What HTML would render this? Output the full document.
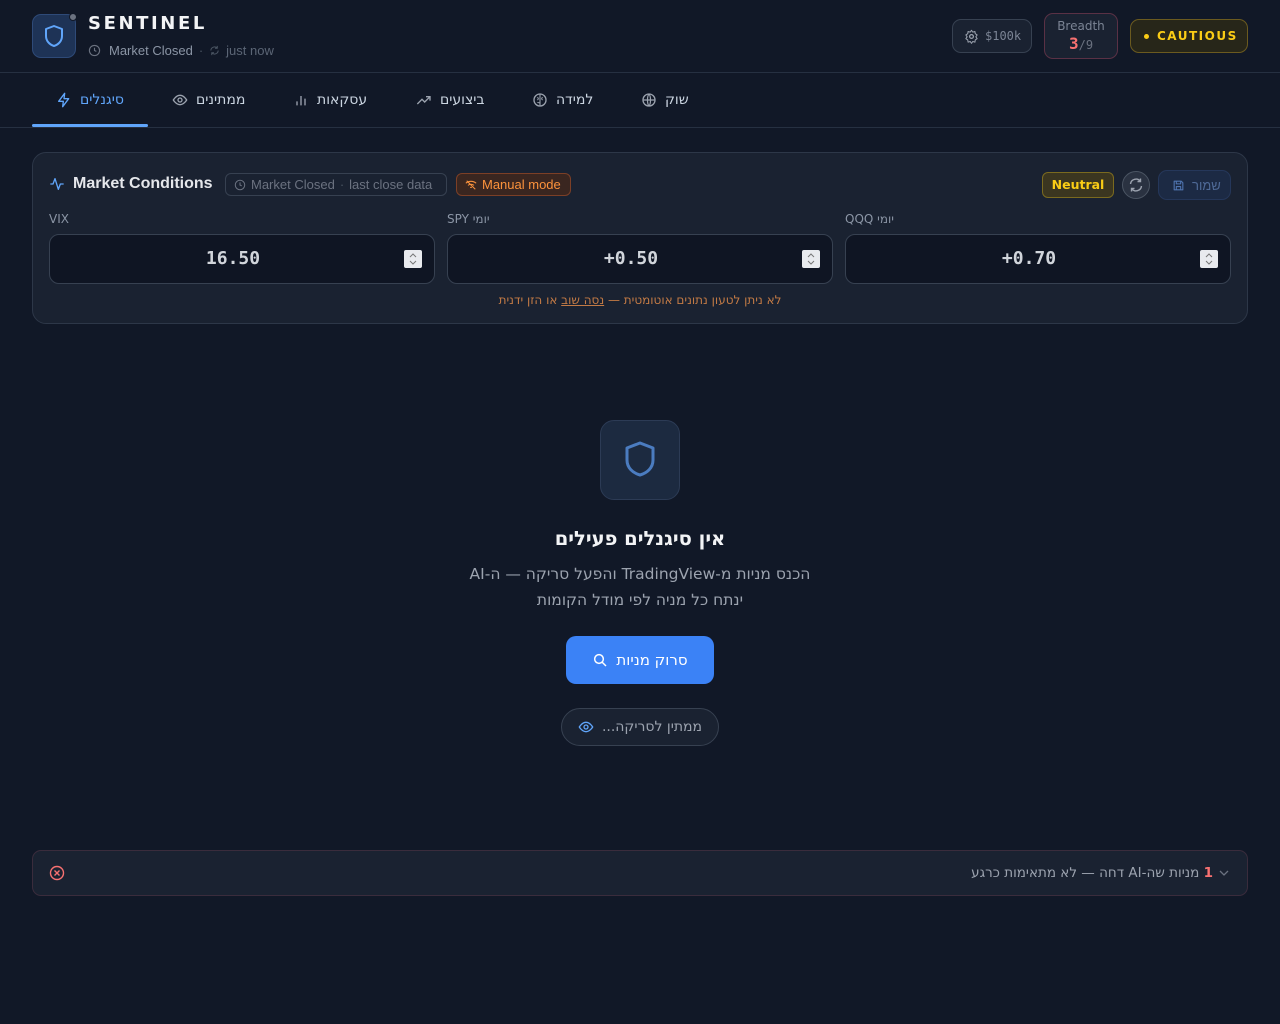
<!DOCTYPE html>
<html><head><meta charset="utf-8">
<style>
*{box-sizing:border-box;margin:0;padding:0}
body{width:1280px;height:1024px;background:#111827;font-family:"Liberation Sans","DejaVu Sans","Noto Sans CJK JP",sans-serif;color:#e5e7eb;position:relative;overflow:hidden}
.mono{font-family:"DejaVu Sans Mono","Liberation Mono",monospace}
.abs{position:absolute}
svg{display:block}
.hdr{position:absolute;left:0;top:0;width:1280px;height:73px;border-bottom:1px solid #263041}
.nav{position:absolute;left:0;top:73px;width:1280px;height:55px;border-bottom:1px solid #263041}
.tab{position:absolute;top:0;height:54px;display:flex;align-items:center;gap:8px;font-size:14px;color:#cbd5e1;font-family:"DejaVu Sans",sans-serif}
.card{position:absolute;left:32px;top:152px;width:1216px;height:172px;background:#1a2231;border:1px solid #2d3748;border-radius:14px}
.inp{position:absolute;top:81px;width:386px;height:50px;background:#0f1523;border:1px solid #374151;border-radius:10px}
.inp .v{position:absolute;left:0;right:18px;top:13px;text-align:center;font-size:18px;color:#d1d5db;font-weight:bold}
.spin{position:absolute;right:12px;top:15px;width:18px;height:18px;background:#e8eaee;border-radius:2px}
.lbl{position:absolute;top:59px;font-size:12px;color:#8b95a5;font-family:"DejaVu Sans",sans-serif}
</style></head><body>
<div class="hdr">
  <div class="abs" style="left:32px;top:14px;width:44px;height:44px;background:#1e3356;border:1px solid #2e4a78;border-radius:9px">
    <svg width="44" height="44" viewBox="0 0 44 44" style="position:absolute;left:-1px;top:-1px"><path d="M22 12 L30 15 V22 C30 27 26.5 30.5 22 32 C17.5 30.5 14 27 14 22 V15 Z" fill="none" stroke="#60a5fa" stroke-width="2" stroke-linejoin="round"/></svg>
  </div>
  <div class="abs" style="left:69px;top:13px;width:8px;height:8px;border-radius:50%;background:#6b7280;border:1.5px solid #111827"></div>
  <div class="abs" style="left:88px;top:13px;font-size:18px;font-weight:bold;letter-spacing:2.6px;color:#f3f4f6;font-family:'DejaVu Sans',sans-serif">SENTINEL</div>
  <div class="abs" style="left:88px;top:43px;font-size:13px;color:#8b95a5;display:flex;align-items:center;gap:6px">
    <svg width="13" height="13" viewBox="0 0 14 14"><circle cx="7" cy="7" r="5.5" fill="none" stroke="#6b7280" stroke-width="1.2"/><path d="M7 4v3l2 1" stroke="#6b7280" fill="none" stroke-width="1.2"/></svg>
    <span style="margin-left:2px">Market Closed</span><span style="color:#4b5563">·</span>
    <svg width="11" height="11" viewBox="0 0 12 12"><path d="M2 6a4 4 0 0 1 7-2.5M10 6a4 4 0 0 1-7 2.5M9 1v2.5H6.5M3 11V8.5h2.5" fill="none" stroke="#4b5563" stroke-width="1.1"/></svg>
    <span style="color:#5b6575">just now</span>
  </div>
  <div class="abs" style="left:952px;top:19px;width:80px;height:34px;border:1px solid #374151;border-radius:9px;background:#1a2231;display:flex;align-items:center;gap:6px;padding-left:11px;font-size:12px;color:#7b8494" >
    <svg width="15" height="15" viewBox="0 0 24 24"><circle cx="12" cy="12" r="3" fill="none" stroke="#9ca3af" stroke-width="2"/><path d="M12 2l2 3 3.5-1 .5 3.5 3 2-2 3 2 3-3 2-.5 3.5-3.5-1-2 3-2-3-3.5 1-.5-3.5-3-2 2-3-2-3 3-2 .5-3.5 3.5 1z" fill="none" stroke="#9ca3af" stroke-width="1.6" stroke-linejoin="round"/></svg>
    <span class="mono">$100k</span>
  </div>
  <div class="abs" style="left:1044px;top:13px;width:74px;height:46px;border:1px solid #5a3145;border-radius:9px;background:#1a2231;text-align:center;font-family:'DejaVu Sans',sans-serif">
    <div style="font-size:12px;color:#7b8494;margin-top:5px">Breadth</div>
    <div class="mono" style="margin-top:1px"><span style="color:#f87171;font-size:16px;font-weight:bold">3</span><span style="color:#6b7280;font-size:12px">/9</span></div>
  </div>
  <div class="abs" style="left:1130px;top:19px;width:118px;height:34px;border:1px solid #6b5a1f;border-radius:9px;background:#272619;display:flex;align-items:center;padding-left:13px;gap:8px;font-size:12px;font-weight:bold;letter-spacing:1.5px;color:#facc15;font-family:'DejaVu Sans',sans-serif">
    <span style="width:5px;height:5px;border-radius:50%;background:#facc15"></span>CAUTIOUS
  </div>
</div>

<div class="nav">
  <div class="abs" style="left:32px;top:51px;width:116px;height:3px;background:#60a5fa;border-radius:2px"></div>
  <div class="tab" style="left:56px;color:#60a5fa"><svg width="16" height="16" viewBox="0 0 24 24"><path d="M13 2L4 14h7l-1 8 9-12h-7z" fill="none" stroke="#60a5fa" stroke-width="2" stroke-linejoin="round"/></svg><span>סיגנלים</span></div>
  <div class="tab" style="left:172px"><svg width="16" height="16" viewBox="0 0 24 24"><path d="M2 12s4-7 10-7 10 7 10 7-4 7-10 7S2 12 2 12z" fill="none" stroke="#9ca3af" stroke-width="2"/><circle cx="12" cy="12" r="3" fill="none" stroke="#9ca3af" stroke-width="2"/></svg><span>ממתינים</span></div>
  <div class="tab" style="left:293px"><svg width="16" height="16" viewBox="0 0 24 24"><path d="M6 20v-6M12 20V6M18 20v-10" stroke="#9ca3af" stroke-width="2"/></svg><span>עסקאות</span></div>
  <div class="tab" style="left:416px"><svg width="16" height="16" viewBox="0 0 24 24"><path d="M2 18l7-7 4 4 8-8M15 7h6v6" fill="none" stroke="#9ca3af" stroke-width="2"/></svg><span>ביצועים</span></div>
  <div class="tab" style="left:532px"><svg width="16" height="16" viewBox="0 0 24 24"><circle cx="12" cy="12" r="9" fill="none" stroke="#9ca3af" stroke-width="2"/><path d="M12 3v18M8 8c2 1 2 3 0 4M16 8c-2 1-2 3 0 4M8 16c2-1 2 1 4 0" fill="none" stroke="#9ca3af" stroke-width="1.6"/></svg><span>למידה</span></div>
  <div class="tab" style="left:641px"><svg width="16" height="16" viewBox="0 0 24 24"><circle cx="12" cy="12" r="9" fill="none" stroke="#9ca3af" stroke-width="2"/><path d="M3 12h18M12 3c3 3 3 15 0 18M12 3c-3 3-3 15 0 18" fill="none" stroke="#9ca3af" stroke-width="1.8"/></svg><span>שוק</span></div>
</div>

<div class="card">
  <div class="abs" style="left:16px;top:23px"><svg width="16" height="16" viewBox="0 0 24 24"><path d="M2 12h4l3-8 5 16 3-8h5" fill="none" stroke="#60a5fa" stroke-width="2" stroke-linejoin="round"/></svg></div>
  <div class="abs" style="left:40px;top:22px;font-size:16px;font-weight:bold;color:#e5e7eb">Market Conditions</div>
  <div class="abs" style="left:192px;top:20px;width:222px;height:23px;border:1px solid #374151;border-radius:6px;display:flex;align-items:center;gap:5px;padding-left:8px;font-size:13px;color:#6b7280">
    <svg width="12" height="12" viewBox="0 0 14 14"><circle cx="7" cy="7" r="5.5" fill="none" stroke="#6b7280" stroke-width="1.2"/><path d="M7 4v3l2 1" stroke="#6b7280" fill="none" stroke-width="1.2"/></svg>Market Closed <span style="color:#4b5563">·</span> last close data</div>
  <div class="abs" style="left:423px;top:20px;width:115px;height:23px;border:1px solid #7c3f26;background:#3a2620;border-radius:6px;display:flex;align-items:center;gap:5px;padding-left:8px;font-size:13px;color:#fb923c">
    <svg width="12" height="12" viewBox="0 0 14 14"><path d="M1 5a9 9 0 0 1 12 0M3.5 7.5a5 5 0 0 1 7 0M6 10a2 2 0 0 1 2 0M2 2l10 10" fill="none" stroke="#fb923c" stroke-width="1.2"/></svg>Manual mode</div>
  <div class="abs" style="left:1009px;top:19px;width:72px;height:26px;border:1px solid #7a6a1f;background:#3b3620;border-radius:6px;text-align:center;line-height:24px;font-size:12.5px;font-weight:bold;color:#facc15;font-family:'DejaVu Sans',sans-serif">Neutral</div>
  <div class="abs" style="left:1089px;top:18px;width:28px;height:28px;border:1px solid #4b5563;background:#2a3241;border-radius:50%"><svg width="26" height="26" viewBox="0 0 26 26"><path d="M7.5 12a5.5 5.5 0 0 1 10-2.5M18.5 14a5.5 5.5 0 0 1-10 2.5M17.5 6.5v3h-3M8.5 19.5v-3h3" fill="none" stroke="#9ca3af" stroke-width="1.4"/></svg></div>
  <div class="abs" style="left:1125px;top:17px;width:73px;height:30px;border:1px solid #25375a;background:#1c2a44;border-radius:9px;display:flex;align-items:center;gap:7px;padding-left:13px;font-size:13px;color:#4f6a97">
    <svg width="13" height="13" viewBox="0 0 24 24"><path d="M4 4h13l3 3v13H4z M8 4v5h8V4 M8 20v-6h8v6" fill="none" stroke="#4f74b0" stroke-width="2" stroke-linejoin="round"/></svg><span dir="rtl">שמור</span></div>

  <div class="lbl" style="left:16px">VIX</div>
  <div class="lbl" style="left:414px"><span dir="rtl">יומי SPY</span></div>
  <div class="lbl" style="left:812px"><span dir="rtl">יומי QQQ</span></div>
  <div class="inp" style="left:16px"><div class="v mono">16.50</div><div class="spin"><svg width="18" height="18" viewBox="0 0 18 18"><path d="M6 7l3-3 3 3M6 11l3 3 3-3" fill="none" stroke="#777" stroke-width="1"/></svg></div></div>
  <div class="inp" style="left:414px"><div class="v mono">+0.50</div><div class="spin"><svg width="18" height="18" viewBox="0 0 18 18"><path d="M6 7l3-3 3 3M6 11l3 3 3-3" fill="none" stroke="#777" stroke-width="1"/></svg></div></div>
  <div class="inp" style="left:812px"><div class="v mono">+0.70</div><div class="spin"><svg width="18" height="18" viewBox="0 0 18 18"><path d="M6 7l3-3 3 3M6 11l3 3 3-3" fill="none" stroke="#777" stroke-width="1"/></svg></div></div>
  <div class="abs" dir="rtl" style="left:0;width:1214px;top:140px;text-align:center;font-size:12px;color:#c27a45;font-family:'DejaVu Sans',sans-serif">לא ניתן לטעון נתונים אוטומטית — <u>נסה שוב</u> או הזן ידנית</div>
</div>

<div class="abs" style="left:600px;top:420px;width:80px;height:80px;background:#1c2a40;border:1px solid #2c3b55;border-radius:14px">
  <svg width="80" height="80" viewBox="0 0 80 80" style="position:absolute;left:-1px;top:-1px"><path d="M40 23 L53 28 V40 C53 48 47 53 40 55 C33 53 27 48 27 40 V28 Z" fill="none" stroke="#4b7cc0" stroke-width="3" stroke-linejoin="round"/></svg>
</div>
<div class="abs" dir="rtl" style="left:0;width:1280px;top:527px;text-align:center;font-size:19.5px;font-weight:bold;color:#f3f4f6;font-family:'DejaVu Sans',sans-serif">אין סיגנלים פעילים</div>
<div class="abs" dir="rtl" style="left:0;width:1280px;top:561px;text-align:center;font-size:15.5px;color:#9ca3af;font-family:'DejaVu Sans',sans-serif;line-height:26px">הכנס מניות מ-TradingView והפעל סריקה — ה-AI<br>ינתח כל מניה לפי מודל הקומות</div>
<div class="abs" style="left:566px;top:636px;width:148px;height:48px;background:#3b82f6;border-radius:10px;display:flex;align-items:center;justify-content:center;gap:8px;font-size:15px;color:#fff;font-family:'DejaVu Sans',sans-serif">
  <svg width="16" height="16" viewBox="0 0 24 24"><circle cx="10.5" cy="10.5" r="6.5" fill="none" stroke="#fff" stroke-width="2.2"/><path d="M15.5 15.5L21 21" stroke="#fff" stroke-width="2.2"/></svg><span dir="rtl">סרוק מניות</span></div>
<div class="abs" style="left:561px;top:708px;width:158px;height:38px;background:#1a2231;border:1px solid #374151;border-radius:19px;display:flex;align-items:center;justify-content:center;gap:8px;font-size:14px;color:#9ca3af;font-family:'DejaVu Sans',sans-serif">
  <svg width="16" height="16" viewBox="0 0 24 24"><path d="M2 12s4-7 10-7 10 7 10 7-4 7-10 7S2 12 2 12z" fill="none" stroke="#60a5fa" stroke-width="2"/><circle cx="12" cy="12" r="3" fill="none" stroke="#60a5fa" stroke-width="2"/></svg><span dir="rtl">ממתין לסריקה...</span></div>

<div class="abs" style="left:32px;top:850px;width:1216px;height:46px;background:#1a2231;border:1px solid #3a2c3c;border-radius:9px">
  <svg class="abs" style="left:16px;top:14px" width="16" height="16" viewBox="0 0 16 16"><circle cx="8" cy="8" r="6.5" fill="none" stroke="#f87171" stroke-width="1.4"/><path d="M5.5 5.5l5 5M10.5 5.5l-5 5" stroke="#f87171" stroke-width="1.4"/></svg>
  <div class="abs" dir="rtl" style="right:16px;top:14px;font-size:13.5px;color:#9ca3af;display:flex;align-items:center;gap:4px;font-family:'DejaVu Sans',sans-serif">
    <svg width="14" height="14" viewBox="0 0 14 14"><path d="M3 5l4 4 4-4" fill="none" stroke="#6b7280" stroke-width="1.3"/></svg>
    <span><b style="color:#f87171">1</b> מניות שה-AI דחה — לא מתאימות כרגע</span>
  </div>
</div>
</body></html>
